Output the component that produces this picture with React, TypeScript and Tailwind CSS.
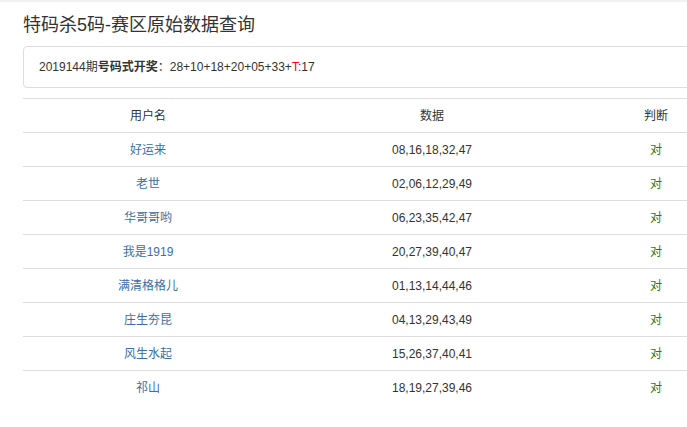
import React from "react";

const rows = [
  ["好运来", "08,16,18,32,47"],
  ["老世", "02,06,12,29,49"],
  ["华哥哥哟", "06,23,35,42,47"],
  ["我是1919", "20,27,39,40,47"],
  ["满清格格儿", "01,13,14,44,46"],
  ["庄生夯昆", "04,13,29,43,49"],
  ["风生水起", "15,26,37,40,41"],
  ["祁山", "18,19,27,39,46"],
];

const font = { fontFamily: '"Liberation Sans", "Noto Sans CJK SC", sans-serif' };

export default function App() {
  return (
    <div className="w-full h-[427px] overflow-hidden bg-white text-[#333]" style={font}>
      <div className="h-[2px] bg-[#f2f2f2]" />
      <div className="w-[740px] pl-[23px]">
        <h1 className="mt-[11px] text-[18px] leading-[24px] font-normal text-[#333]">特码杀5码-赛区原始数据查询</h1>
        <div className="mt-[9px] h-[42px] border border-[#ddd] rounded-[4px] pl-[15px] flex items-center text-[12px]">
          <span>
            2019144期<span className="font-bold">号码式开奖</span>：28+10+18+20+05+33+<span className="text-[#ff0000]">T</span>:17
          </span>
        </div>
        <table className="mt-[10px] w-[698px] border-collapse text-[12px]">
          <thead>
            <tr className="h-[34px] border-t border-[#ddd]">
              <th className="w-[250px] font-normal text-center">用户名</th>
              <th className="w-[318px] font-normal text-center">数据</th>
              <th className="w-[130px] font-normal text-center">判断</th>
            </tr>
          </thead>
          <tbody>
            {rows.map(([n, d]) => (
              <tr key={n} className="h-[34px] border-t border-[#ddd]">
                <td className="text-center text-[#3a6ea5]">{n}</td>
                <td className="text-center">{d}</td>
                <td className="text-center text-[#1e7a1e]">对</td>
              </tr>
            ))}
          </tbody>
        </table>
      </div>
    </div>
  );
}
